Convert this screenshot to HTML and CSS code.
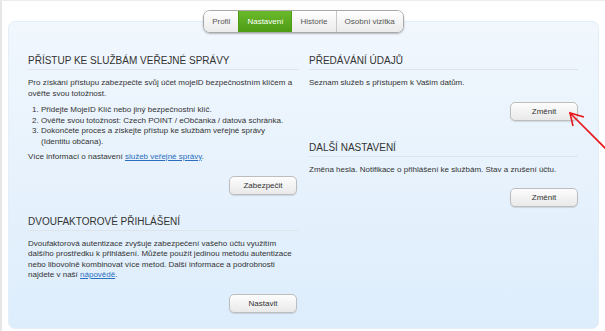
FILE: index.html
```html
<!DOCTYPE html>
<html lang="cs">
<head>
    <meta charset="UTF-8">
    <meta name="viewport" content="width=device-width, initial-scale=1.0">
    <title>mojeID - Nastavení</title>
    <link rel="stylesheet" href="styles.css">
</head>
<body>

<div class="page">
    <div class="tabs">
        <a class="tab" href="#">Profil</a>
        <a class="tab active" href="#">Nastavení</a>
        <a class="tab" href="#">Historie</a>
        <a class="tab" href="#">Osobní vizitka</a>
    </div>

    <div class="panel">
        <div class="column">
            <div class="section">
                <h2>Přístup ke službám veřejné správy</h2>
                <p>Pro získání přístupu zabezpečte svůj účet mojeID bezpečnostním klíčem a ověřte svou totožnost.</p>
                <ol>
                    <li>Přidejte MojeID Klíč nebo jiný bezpečnostní klíč.</li>
                    <li>Ověřte svou totožnost: Czech POINT / eObčanka / datová schránka.</li>
                    <li>Dokončete proces a získejte přístup ke službám veřejné správy<br>(Identitu občana).</li>
                </ol>
                <p class="more">Více informací o nastavení <a href="#">služeb veřejné správy</a>.</p>
                <div class="actions"><button class="btn">Zabezpečit</button></div>
            </div>

            <div class="section">
                <h2>Dvoufaktorové přihlášení</h2>
                <p>Dvoufaktorová autentizace zvyšuje zabezpečení vašeho účtu využitím dalšího prostředku k přihlášení. Můžete použít jedinou metodu autentizace nebo libovolně kombinovat více metod. Další informace a podrobnosti najdete v naší <a href="#">nápovědě</a>.</p>
                <div class="actions"><button class="btn">Nastavit</button></div>
            </div>
        </div>

        <div class="column">
            <div class="section">
                <h2>Předávání údajů</h2>
                <p>Seznam služeb s přístupem k Vašim datům.</p>
                <div class="actions"><button class="btn">Změnit</button></div>
            </div>

            <div class="section">
                <h2>Další nastavení</h2>
                <p>Změna hesla. Notifikace o přihlášení ke službám. Stav a zrušení účtu.</p>
                <div class="actions"><button class="btn">Změnit</button></div>
            </div>
        </div>
    </div>

    <!-- red annotation arrow pointing at the first "Změnit" button -->
    <svg class="arrow" width="50" height="50" viewBox="0 0 50 50">
        <path d="M47 48 L11 12" stroke="#e8141b" stroke-width="1.6" fill="none"/>
        <path d="M25 16 L11 12 L14 25" stroke="#e8141b" stroke-width="1.6" fill="none"/>
    </svg>
</div>

</body>
</html>
```

FILE: styles.css
```css
body {
    margin: 0;
    font-family: "Liberation Sans", Arial, sans-serif;
    font-size: 8px;
    color: #333;
    background-color: #ffffff;
}
.page {
    position: relative;
    height: 330px;
    border-top: 1px solid #ececec;
    border-left: 2px solid #e6e6e6;
    padding-top: 9px;
    overflow: hidden;
}
.tabs {
    position: relative;
    z-index: 2;
    display: flex;
    width: fit-content;
    margin: 0 auto -12px;
    border: 1px solid #a9a9a9;
    border-radius: 7px;
    overflow: hidden;
    box-shadow: 0 1px 2px rgba(0, 0, 0, 0.25);
}
.tab {
    display: block;
    height: 21px;
    line-height: 21px;
    padding: 0 8px;
    font-size: 8px;
    color: #555;
    text-decoration: none;
    background: linear-gradient(#ffffff, #ebebeb);
    border-left: 1px solid #c8c8c8;
}
.tab:first-child {
    border-left: none;
}
.tab.active {
    color: #ffffff;
    background: linear-gradient(#6cb92b, #4c9c14);
    border-left-color: #4c9c14;
}
.tab.active + .tab {
    border-left-color: #4c9c14;
}
.panel {
    display: grid;
    grid-template-columns: 271px 269px;
    column-gap: 10px;
    height: 308px;
    box-sizing: border-box;
    margin: 0 6px;
    padding: 33px 20px 0 19px;
    border: 1px solid #e4eef8;
    border-radius: 7px;
    background: linear-gradient(#f1f7fd, #ddedfc);
}
.section {
    margin-bottom: 21px;
}
h2 {
    margin: 0;
    padding-bottom: 2px;
    font-size: 10px;
    line-height: 12px;
    font-weight: normal;
    text-transform: uppercase;
    color: #333;
    border-bottom: 1px solid #dde4ea;
}
p {
    margin: 8px 0 0;
    line-height: 10.5px;
}
ol {
    margin: 6px 0 0;
    padding-left: 13px;
    line-height: 10.5px;
}
.more {
    margin-top: 5px;
}
a {
    color: #2a6fc0;
}
.actions {
    display: flex;
    justify-content: flex-end;
    margin-top: 13px;
    padding-right: 2px;
}
.column + .column .actions {
    padding-right: 0;
}
.btn {
    width: 68px;
    height: 19px;
    font-family: inherit;
    font-size: 8px;
    color: #333;
    border: 1px solid #bdbdbd;
    border-radius: 5px;
    background: linear-gradient(#fdfdfd, #e9e9e9);
    box-shadow: 0 1px 1px rgba(0, 0, 0, 0.12);
    cursor: pointer;
}
.arrow {
    position: absolute;
    left: 557px;
    top: 100px;
}
```
